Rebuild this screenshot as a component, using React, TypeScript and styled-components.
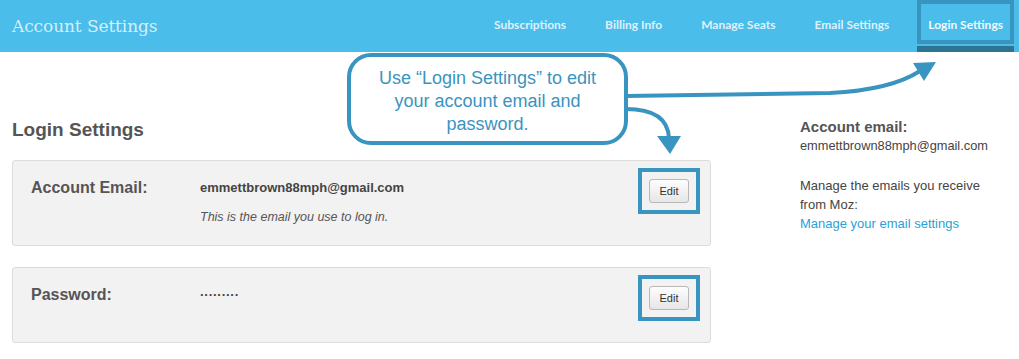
import React from "react";
import styled, { createGlobalStyle } from "styled-components";

const GlobalStyle = createGlobalStyle`
  html, body {
    margin: 0;
    padding: 0;
    background: #ffffff;
  }
  body {
    font-family: "Liberation Sans", Arial, Helvetica, sans-serif;
    color: #444;
    width: 1019px;
    height: 359px;
    overflow: hidden;
  }
  * { box-sizing: border-box; }
`;

const ACCENT = "#3a94c0";

const Page = styled.div`
  position: relative;
  width: 1019px;
  height: 359px;
`;

const Header = styled.header`
  display: flex;
  justify-content: space-between;
  align-items: flex-start;
  height: 52px;
  background: #4bbdeb;
  padding: 0 5px 0 12px;
`;

const Brand = styled.div`
  font-family: "DejaVu Serif", "Liberation Serif", serif;
  font-size: 17px;
  line-height: 53px;
  color: #d6eef9;
  letter-spacing: -0.1px;
`;

const Nav = styled.nav`
  display: flex;
  align-items: flex-start;
  gap: 17px;
  height: 52px;
`;

const NavItem = styled.div`
  display: flex;
  flex-direction: column;
`;

const NavLink = styled.a<{ $active?: boolean }>`
  display: flex;
  align-items: center;
  height: 44px;
  padding: 6px 7px 0;
  border: 4px solid ${(p) => (p.$active ? ACCENT : "transparent")};
  font-family: Lato, "Liberation Sans", sans-serif;
  font-weight: 700;
  font-size: 12px;
  line-height: 14px;
  color: ${(p) => (p.$active ? "#f2fafe" : "#def1fb")};
  white-space: nowrap;
  text-decoration: none;
`;

const Indicator = styled.div<{ $active?: boolean }>`
  height: 6px;
  margin-top: 2px;
  background: ${(p) => (p.$active ? "#2e7391" : "transparent")};
`;

const Main = styled.main`
  display: flex;
  align-items: flex-start;
  padding: 0 12px;
`;

const LeftColumn = styled.section`
  width: 699px;
`;

const PageTitle = styled.h2`
  margin: 68px 0 21px;
  font-size: 19px;
  line-height: 19px;
  font-weight: 700;
  color: #555;
`;

const Card = styled.div`
  display: flex;
  align-items: flex-start;
  min-height: 76px;
  margin-bottom: 21px;
  padding: 7px 10px 18px 18px;
  background: #f2f2f2;
  border: 1px solid #dcdcdc;
  border-radius: 3px;
`;

const FieldLabel = styled.div`
  width: 169px;
  padding-top: 10px;
  font-size: 16px;
  line-height: 20px;
  font-weight: 700;
  color: #555;
`;

const FieldBody = styled.div`
  flex: 1;
  padding-top: 10px;
`;

const FieldValue = styled.div`
  font-size: 13px;
  line-height: 20px;
  font-weight: 700;
  color: #444;
`;

const Dots = styled(FieldValue)`
  font-size: 13px;
  letter-spacing: 0;
`;

const Hint = styled.div`
  margin-top: 9px;
  font-size: 12.5px;
  line-height: 20px;
  font-style: italic;
  color: #555;
`;

const EditHighlight = styled.div`
  padding: 7px;
  border: 4px solid ${ACCENT};
`;

const EditButton = styled.button`
  display: block;
  width: 40px;
  height: 24px;
  padding: 0;
  border: 1px solid #b8b8b8;
  border-radius: 3px;
  background: linear-gradient(#fdfdfd, #e6e6e6);
  font-family: "Liberation Sans", Arial, sans-serif;
  font-size: 11px;
  color: #333;
`;

const Sidebar = styled.aside`
  margin-left: 89px;
  padding-top: 66px;
`;

const SidebarTitle = styled.div`
  font-size: 15px;
  line-height: 18px;
  font-weight: 700;
  color: #555;
`;

const SidebarEmail = styled.div`
  font-size: 12.8px;
  line-height: 20px;
  color: #444;
`;

const SidebarText = styled.p`
  margin: 20px 0 0;
  font-size: 13px;
  line-height: 19px;
  color: #444;
`;

const SidebarLink = styled.a`
  color: #2a9fd8;
  text-decoration: none;
`;

const Callout = styled.div`
  position: absolute;
  left: 347px;
  top: 53px;
  width: 281px;
  height: 92px;
  display: flex;
  align-items: center;
  justify-content: center;
  padding-top: 4px;
  border: 4px solid ${ACCENT};
  border-radius: 24px;
  background: #fff;
  font-size: 18px;
  line-height: 23px;
  text-align: center;
  color: ${ACCENT};
  white-space: nowrap;
`;

const ArrowLayer = styled.svg`
  position: absolute;
  left: 0;
  top: 0;
  pointer-events: none;
`;

const navItems = [
  "Subscriptions",
  "Billing Info",
  "Manage Seats",
  "Email Settings",
  "Login Settings",
];

export default function App() {
  return (
    <Page>
      <GlobalStyle />
      <Header>
        <Brand>Account Settings</Brand>
        <Nav>
          {navItems.map((item) => {
            const active = item === "Login Settings";
            return (
              <NavItem key={item}>
                <NavLink $active={active}>{item}</NavLink>
                <Indicator $active={active} />
              </NavItem>
            );
          })}
        </Nav>
      </Header>

      <Main>
        <LeftColumn>
          <PageTitle>Login Settings</PageTitle>
          <Card>
            <FieldLabel>Account Email:</FieldLabel>
            <FieldBody>
              <FieldValue>emmettbrown88mph@gmail.com</FieldValue>
              <Hint>This is the email you use to log in.</Hint>
            </FieldBody>
            <EditHighlight>
              <EditButton>Edit</EditButton>
            </EditHighlight>
          </Card>
          <Card>
            <FieldLabel>Password:</FieldLabel>
            <FieldBody>
              <Dots>·········</Dots>
            </FieldBody>
            <EditHighlight>
              <EditButton>Edit</EditButton>
            </EditHighlight>
          </Card>
        </LeftColumn>

        <Sidebar>
          <SidebarTitle>Account email:</SidebarTitle>
          <SidebarEmail>emmettbrown88mph@gmail.com</SidebarEmail>
          <SidebarText>
            Manage the emails you receive
            <br />
            from Moz:
            <br />
            <SidebarLink href="#">Manage your email settings</SidebarLink>
          </SidebarText>
        </Sidebar>
      </Main>

      <Callout>
        <span>
          Use “Login Settings” to edit
          <br />
          your account email and
          <br />
          password.
        </span>
      </Callout>

      <ArrowLayer width="1019" height="359" viewBox="0 0 1019 359">
        <path
          d="M 626 96 L 830 93 C 870 91, 900 84, 920 71"
          fill="none"
          stroke={ACCENT}
          strokeWidth="4"
        />
        <polygon points="913,63 936,62 924,81" fill={ACCENT} />
        <path
          d="M 626 109 C 652 109, 668 118, 669 138"
          fill="none"
          stroke={ACCENT}
          strokeWidth="4"
        />
        <polygon points="657,136 681,136 670,154" fill={ACCENT} />
      </ArrowLayer>
    </Page>
  );
}
